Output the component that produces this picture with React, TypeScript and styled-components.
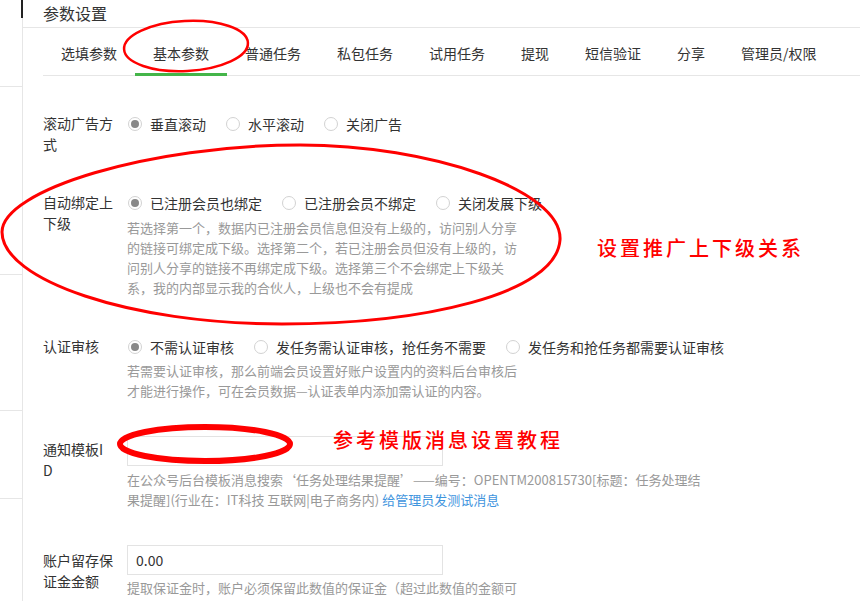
import React from 'react'
import styled, { createGlobalStyle } from 'styled-components'

const GlobalStyle = createGlobalStyle`
  html, body {
    margin: 0;
    padding: 0;
    background: #fff;
  }
  body {
    font-family: 'Noto Sans CJK SC', 'Microsoft YaHei', sans-serif;
    color: #333;
    overflow: hidden;
  }
`

const Page = styled.div`
  position: relative;
  display: flex;
  width: 860px;
  height: 601px;
  overflow: hidden;
`

const Sidebar = styled.div`
  position: relative;
  flex: 0 0 22px;
  display: flex;
  flex-direction: column;
  border-right: 1px solid #e6e6e6;
`

const SideMarker = styled.span`
  position: absolute;
  top: 0;
  right: -1px;
  width: 2px;
  height: 18px;
  background: #222;
`

const SideItem = styled.div<{ h: number }>`
  box-sizing: border-box;
  height: ${({ h }) => h}px;
  flex-shrink: 0;
  border-bottom: 1px solid #e6e6e6;
`

const Main = styled.div`
  flex: 1;
  min-width: 0;
`

const TitleBar = styled.div`
  height: 27px;
  line-height: 27px;
  padding-left: 20px;
  font-size: 16px;
  color: #333;
  border-bottom: 1px solid #e6e6e6;
`

const TabBar = styled.div`
  display: flex;
  margin: 14px 0 0 20px;
  border-bottom: 1px solid #e6e6e6;
`

const Tab = styled.div<{ active?: boolean }>`
  padding: 0 18px 9px;
  line-height: 22px;
  font-size: 14px;
  color: #333;
  white-space: nowrap;
  margin-bottom: -1px;
  border-bottom: 3px solid ${({ active }) => (active ? '#44b549' : 'transparent')};
`

const Form = styled.div`
  padding: 37px 0 0 20px;
`

const Row = styled.div<{ space: number }>`
  display: flex;
  align-items: flex-start;
  margin-bottom: ${({ space }) => space}px;
`

const Label = styled.div<{ offset?: number }>`
  flex: 0 0 72px;
  margin-right: 12px;
  padding-top: ${({ offset }) => offset || 0}px;
  font-size: 14px;
  line-height: 21px;
  color: #333;
`

const Field = styled.div`
  display: flex;
  flex-direction: column;
  min-width: 0;
`

const RadioGroup = styled.div`
  display: flex;
  align-items: center;
  height: 22px;
`

const RadioItem = styled.label`
  display: flex;
  align-items: center;
  margin-right: 19px;
  font-size: 14px;
  line-height: 22px;
  color: #333;
  white-space: nowrap;
`

const RadioDot = styled.span<{ checked?: boolean }>`
  position: relative;
  box-sizing: border-box;
  width: 14px;
  height: 14px;
  margin: 0 8px 0 1px;
  border: 1px solid #d2d2d2;
  border-radius: 50%;
  background: #fff;
  &::after {
    content: '';
    display: ${({ checked }) => (checked ? 'block' : 'none')};
    position: absolute;
    top: 2px;
    left: 2px;
    width: 8px;
    height: 8px;
    border-radius: 50%;
    background: #888;
  }
`

const Help = styled.div<{ w: number; gap?: number }>`
  width: ${({ w }) => w}px;
  margin-top: ${({ gap }) => (gap === undefined ? 4 : gap)}px;
  font-size: 13px;
  line-height: 20px;
  color: #999;
`

const Link = styled.a`
  color: #3f95de;
  text-decoration: none;
`

const TextInput = styled.input`
  box-sizing: border-box;
  width: 316px;
  height: 30px;
  padding: 0 8px;
  border: 1px solid #e3e3e3;
  outline: none;
  font-family: inherit;
  font-size: 14px;
  color: #333;
  background: #fff;
`

const Marks = styled.svg`
  position: absolute;
  top: 0;
  left: 0;
  pointer-events: none;
`

const Note = styled.div<{ x: number; y: number }>`
  position: absolute;
  left: ${({ x }) => x}px;
  top: ${({ y }) => y}px;
  font-size: 20px;
  font-weight: 500;
  line-height: 24px;
  letter-spacing: 3px;
  color: #ff0000;
  white-space: nowrap;
`

type Opt = { text: string; checked?: boolean }

function Radios({ options }: { options: Opt[] }) {
  return (
    <RadioGroup>
      {options.map((o) => (
        <RadioItem key={o.text}>
          <RadioDot checked={o.checked} />
          {o.text}
        </RadioItem>
      ))}
    </RadioGroup>
  )
}

const tabs = ['选填参数', '基本参数', '普通任务', '私包任务', '试用任务', '提现', '短信验证', '分享', '管理员/权限']

export default function App() {
  return (
    <Page>
      <GlobalStyle />
      <Sidebar>
        <SideMarker />
        <SideItem h={87} />
        <SideItem h={188} />
        <SideItem h={136} />
        <SideItem h={88} />
      </Sidebar>
      <Main>
        <TitleBar>参数设置</TitleBar>
        <TabBar>
          {tabs.map((t) => (
            <Tab key={t} active={t === '基本参数'}>
              {t}
            </Tab>
          ))}
        </TabBar>
        <Form>
          <Row space={37}>
            <Label>滚动广告方式</Label>
            <Field>
              <Radios options={[{ text: '垂直滚动', checked: true }, { text: '水平滚动' }, { text: '关闭广告' }]} />
            </Field>
          </Row>
          <Row space={38}>
            <Label>自动绑定上下级</Label>
            <Field>
              <Radios
                options={[{ text: '已注册会员也绑定', checked: true }, { text: '已注册会员不绑定' }, { text: '关闭发展下级' }]}
              />
              <Help w={392}>
                若选择第一个，数据内已注册会员信息但没有上级的，访问别人分享的链接可绑定成下级。选择第二个，若已注册会员但没有上级的，访问别人分享的链接不再绑定成下级。选择第三个不会绑定上下级关系，我的内部显示我的合伙人，上级也不会有提成
              </Help>
            </Field>
          </Row>
          <Row space={35}>
            <Label>认证审核</Label>
            <Field>
              <Radios
                options={[
                  { text: '不需认证审核', checked: true },
                  { text: '发任务需认证审核，抢任务不需要' },
                  { text: '发任务和抢任务都需要认证审核' },
                ]}
              />
              <Help w={392} gap={3}>
                若需要认证审核，那么前端会员设置好账户设置内的资料后台审核后才能进行操作，可在会员数据—认证表单内添加需认证的内容。
              </Help>
            </Field>
          </Row>
          <Row space={35}>
            <Label offset={3}>
              通知模板I
              <br />D
            </Label>
            <Field>
              <TextInput defaultValue="" />
              <Help w={580}>
                在公众号后台模板消息搜索‘任务处理结果提醒’——编号：OPENTM200815730[标题：任务处理结果提醒](行业在：IT科技 互联网|电子商务内){' '}
                <Link>给管理员发测试消息</Link>
              </Help>
            </Field>
          </Row>
          <Row space={30}>
            <Label offset={5}>账户留存保证金金额</Label>
            <Field>
              <TextInput defaultValue="0.00" />
              <Help w={392} gap={3}>
                提取保证金时，账户必须保留此数值的保证金（超过此数值的金额可提现）
              </Help>
            </Field>
          </Row>
        </Form>
      </Main>

      <Marks width={860} height={601} viewBox="0 0 860 601">
        <ellipse cx={186} cy={46} rx={62} ry={25} fill="none" stroke="#ff0000" strokeWidth={2.5} transform="rotate(-3 186 46)" />
        <path
          d="M 2 232 C 2 190, 150 145, 300 145 C 430 145, 563 190, 560 240 C 556 295, 420 324, 282 324 C 130 324, 2 280, 2 232 Z"
          fill="none"
          stroke="#ff0000"
          strokeWidth={3}
        />
        <ellipse cx={205} cy={444} rx={85} ry={17} fill="none" stroke="#ff0000" strokeWidth={6} />
      </Marks>
      <Note x={597} y={236}>设置推广上下级关系</Note>
      <Note x={333} y={428}>参考模版消息设置教程</Note>
    </Page>
  )
}
